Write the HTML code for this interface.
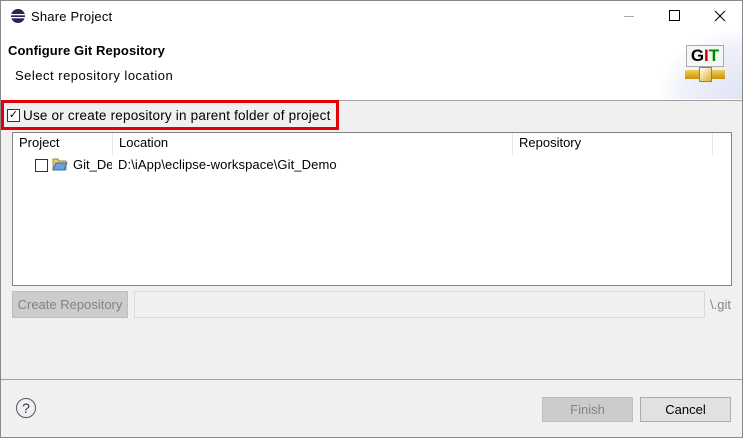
<!DOCTYPE html><html><head><style>
body{margin:0;width:743px;height:438px;overflow:hidden;font-family:"Liberation Sans",sans-serif;font-size:12px;color:#000}
.win{position:absolute;left:0;top:0;width:741px;height:436px;border:1px solid #8a8a8a;background:#f0f0f0}
.a{position:absolute}
</style></head><body><div class="win">
<div class="a" style="left:0;top:0;width:741px;height:99px;background:#fff;border-bottom:1px solid #a0a0a0"></div>
<div class="a" style="left:660px;top:30px;width:81px;height:68px;background:radial-gradient(ellipse at 100% 100%,#dfe4f5 0,#eef0fa 50%,#fff 75%)"></div>
<svg class="a" style="left:9px;top:7px" width="16" height="16"><circle cx="8" cy="8" r="7" fill="#2c2255"/><rect x="1" y="6" width="14" height="1.3" fill="#fff"/><rect x="1" y="9" width="14" height="1.3" fill="#fff"/></svg>
<div class="a" style="left:30px;top:8px;font-size:13px;letter-spacing:0.2px">Share Project</div>
<div class="a" style="left:623px;top:15px;width:10px;height:1px;background:#aaa"></div>
<div class="a" style="left:668px;top:9px;width:9px;height:9px;border:1px solid #000"></div>
<svg class="a" style="left:713px;top:9px" width="12" height="12"><path d="M1 1L11 11M11 1L1 11" stroke="#000" stroke-width="1.1"/></svg>
<div class="a" style="left:7px;top:42px;font-weight:bold;font-size:13px;letter-spacing:0.1px">Configure Git Repository</div>
<div class="a" style="left:14px;top:67px;font-size:13px;letter-spacing:0.5px">Select repository location</div>
<div class="a" style="left:685px;top:44px;width:36px;height:20px;background:#f5f7f5;border:1px solid #aaa;font-weight:bold;font-size:17px;text-align:center;line-height:20px"><span>G</span><span style="color:#c00">I</span><span style="color:#080">T</span></div>
<div class="a" style="left:684px;top:69px;width:40px;height:9px;background:linear-gradient(#f3d050,#c89010)"></div>
<div class="a" style="left:698px;top:66px;width:11px;height:13px;background:linear-gradient(135deg,#fff,#e0b030);border:1px solid #b08010"></div>
<div class="a" style="left:0px;top:99px;width:332px;height:24px;border:3px solid #e0000a"></div>
<div class="a" style="left:6px;top:108px;width:11px;height:11px;border:1px solid #333;background:#fff;font-size:11px;line-height:11px;text-align:center">✓</div>
<div class="a" style="left:22px;top:107px;font-size:13.5px;letter-spacing:0.2px">Use or create repository in parent folder of project</div>
<div class="a" style="left:11px;top:131px;width:718px;height:152px;background:#fff;border:1px solid #828282"></div>
<div class="a" style="left:111px;top:132px;width:1px;height:22px;background:#e5e5e5"></div>
<div class="a" style="left:511px;top:132px;width:1px;height:22px;background:#e5e5e5"></div>
<div class="a" style="left:711px;top:132px;width:1px;height:22px;background:#e5e5e5"></div>
<div class="a" style="left:18px;top:134px;font-size:13px">Project</div>
<div class="a" style="left:118px;top:134px;font-size:13px">Location</div>
<div class="a" style="left:518px;top:134px;font-size:13px">Repository</div>
<div class="a" style="left:34px;top:158px;width:11px;height:11px;border:1px solid #333"></div>
<svg class="a" style="left:51px;top:156px" width="16" height="14"><path d="M1 2h5l1 2h7v9H1z" fill="#e8c878" stroke="#a88030"/><path d="M1 13l3-7h11l-3 7z" fill="#6aa0e0" stroke="#3a70b0"/></svg>
<div class="a" style="left:72px;top:156px;font-size:13px;width:39px;overflow:hidden;white-space:nowrap">Git_Demo</div>
<div class="a" style="left:117px;top:156px;font-size:13px;letter-spacing:0.1px">D:\iApp\eclipse-workspace\Git_Demo</div>
<div class="a" style="left:11px;top:290px;width:114px;height:25px;background:#ccc;border:1px solid #bfbfbf;color:#838383;font-size:13px;text-align:center;line-height:25px">Create Repository</div>
<div class="a" style="left:133px;top:290px;width:569px;height:25px;border:1px solid #d9d9d9;background:#f0f0f0"></div>
<div class="a" style="left:709px;top:296px;color:#838383;font-size:13px">\.git</div>
<div class="a" style="left:0;top:378px;width:741px;height:1px;background:#a0a0a0"></div>
<div class="a" style="left:15px;top:397px;width:18px;height:18px;border:1.5px solid #555;border-radius:50%;text-align:center;line-height:18px;font-size:14px;color:#335">?</div>
<div class="a" style="left:541px;top:396px;width:89px;height:23px;background:#ccc;border:1px solid #bfbfbf;color:#838383;font-size:13px;text-align:center;line-height:23px">Finish</div>
<div class="a" style="left:639px;top:396px;width:89px;height:23px;background:#e1e1e1;border:1px solid #adadad;font-size:13px;text-align:center;line-height:23px">Cancel</div>
</div></body></html>
